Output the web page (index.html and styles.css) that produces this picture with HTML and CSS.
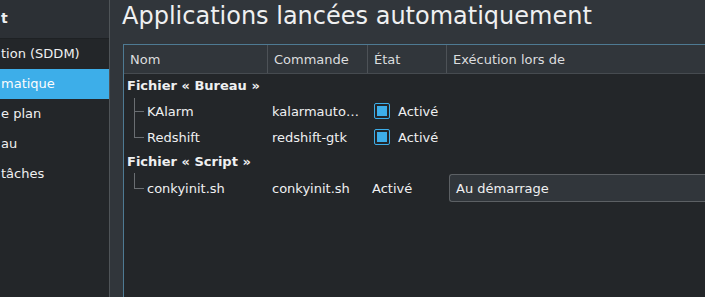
FILE: index.html
```html
<!DOCTYPE html>
<html lang="fr">
<head>
<meta charset="utf-8">
<link rel="stylesheet" href="styles.css">
</head>
<body>
<div class="sidebar">
  <div class="side-head">t</div>
  <div class="side-item">tion (SDDM)</div>
  <div class="side-item selected">matique</div>
  <div class="side-item">e plan</div>
  <div class="side-item">au</div>
  <div class="side-item">tâches</div>
</div>
<div class="main">
  <h1 class="title">Applications lancées automatiquement</h1>
  <div class="table">
    <div class="row head">
      <div class="hcell">Nom</div>
      <div class="hcell">Commande</div>
      <div class="hcell">État</div>
      <div class="hcell last">Exécution lors de</div>
    </div>
    <div class="body">
      <div class="row group">Fichier « Bureau »</div>
      <div class="row item">
        <div class="cell name"><span class="tree mid"></span>KAlarm</div>
        <div class="cell cmd">kalarmauto…</div>
        <div class="cell state"><span class="check"></span>Activé</div>
        <div class="cell"></div>
      </div>
      <div class="row item">
        <div class="cell name"><span class="tree end"></span>Redshift</div>
        <div class="cell cmd">redshift-gtk</div>
        <div class="cell state"><span class="check"></span>Activé</div>
        <div class="cell"></div>
      </div>
      <div class="row group">Fichier « Script »</div>
      <div class="row item tall">
        <div class="cell name"><span class="tree end"></span>conkyinit.sh</div>
        <div class="cell cmd">conkyinit.sh</div>
        <div class="cell state plain">Activé</div>
        <div class="cell combo-cell"><div class="combo">Au démarrage</div></div>
      </div>
    </div>
  </div>
</div>
</body>
</html>
```
FILE: styles.css
```css
* { box-sizing: border-box; }
html, body { margin: 0; padding: 0; }
body {
  width: 705px;
  height: 297px;
  overflow: hidden;
  display: flex;
  background: #31363b;
  color: #eff0f1;
  font-family: "DejaVu Sans", "Noto Sans", sans-serif;
  font-size: 13px;
}
.sidebar {
  width: 110px;
  flex: none;
  background: #232629;
  border-right: 1px solid #4f5458;
  display: flex;
  flex-direction: column;
}
.side-head {
  height: 39px;
  background: #2c3035;
  border-bottom: 1px solid #1e2124;
  font-weight: bold;
  font-size: 14px;
  line-height: 36px;
  padding-left: 1px;
}
.side-item {
  height: 30px;
  line-height: 30px;
  padding-left: 1px;
  white-space: nowrap;
}
.side-item.selected { background: #3daee9; color: #fcfcfc; }
.main {
  flex: 1;
  min-width: 0;
  padding: 0 0 0 12px;
  display: flex;
  flex-direction: column;
}
.title {
  margin: 0;
  font-size: 24px;
  font-weight: normal;
  line-height: 32px;
  height: 44px;
  padding-top: 0;
  color: #eff0f1;
  white-space: nowrap;
}
.table {
  flex: 1;
  border-top: 1px solid #4e7a93;
  border-left: 1px solid #4e7a93;
  background: #232629;
  display: flex;
  flex-direction: column;
  width: 600px;
  margin-left: 1px;
}
.row {
  display: grid;
  grid-template-columns: 144px 100px 79px 1fr;
  align-items: center;
}
.head {
  height: 29px;
  background: #31363b;
  border-bottom: 1px solid #464b50;
}
.hcell {
  height: 100%;
  display: flex;
  align-items: center;
  padding-left: 6px;
  color: #dcdddf;
  border-right: 1px solid #4d5257;
}
.hcell.last { border-right: none; }
.group {
  display: block;
  height: 23px;
  line-height: 23px;
  font-weight: bold;
  padding-left: 3px;
}
.body .row:first-child { height: 24px; line-height: 24px; }
.item { height: 26px; }
.item.tall { height: 30px; }
.cell {
  height: 100%;
  display: flex;
  align-items: center;
  white-space: nowrap;
}
.name { padding-left: 10px; }
.cmd { padding-left: 4px; }
.state { padding-left: 6px; }
.state.plain { padding-left: 4px; }
.tree {
  width: 13px;
  height: 100%;
  flex: none;
  position: relative;
}
.tree::before {
  content: "";
  position: absolute;
  left: 0;
  top: 0;
  width: 1px;
  background: #6a6e72;
}
.tree.mid::before { height: 100%; }
.tree.end::before { height: 50%; }
.tree::after {
  content: "";
  position: absolute;
  left: 0;
  top: 50%;
  width: 10px;
  height: 1px;
  background: #6a6e72;
}
.check {
  width: 16px;
  height: 16px;
  border: 1px solid #3daee9;
  border-radius: 2px;
  padding: 2px;
  margin-right: 8px;
  display: inline-flex;
}
.check::before {
  content: "";
  flex: 1;
  background: #3daee9;
}
.combo-cell { padding-left: 2px; }
.combo {
  width: 100%;
  height: 28px;
  border: 1px solid #5c6064;
  border-right: none;
  border-radius: 3px 0 0 3px;
  background: #31363b;
  display: flex;
  align-items: center;
  padding-left: 6px;
}
```
